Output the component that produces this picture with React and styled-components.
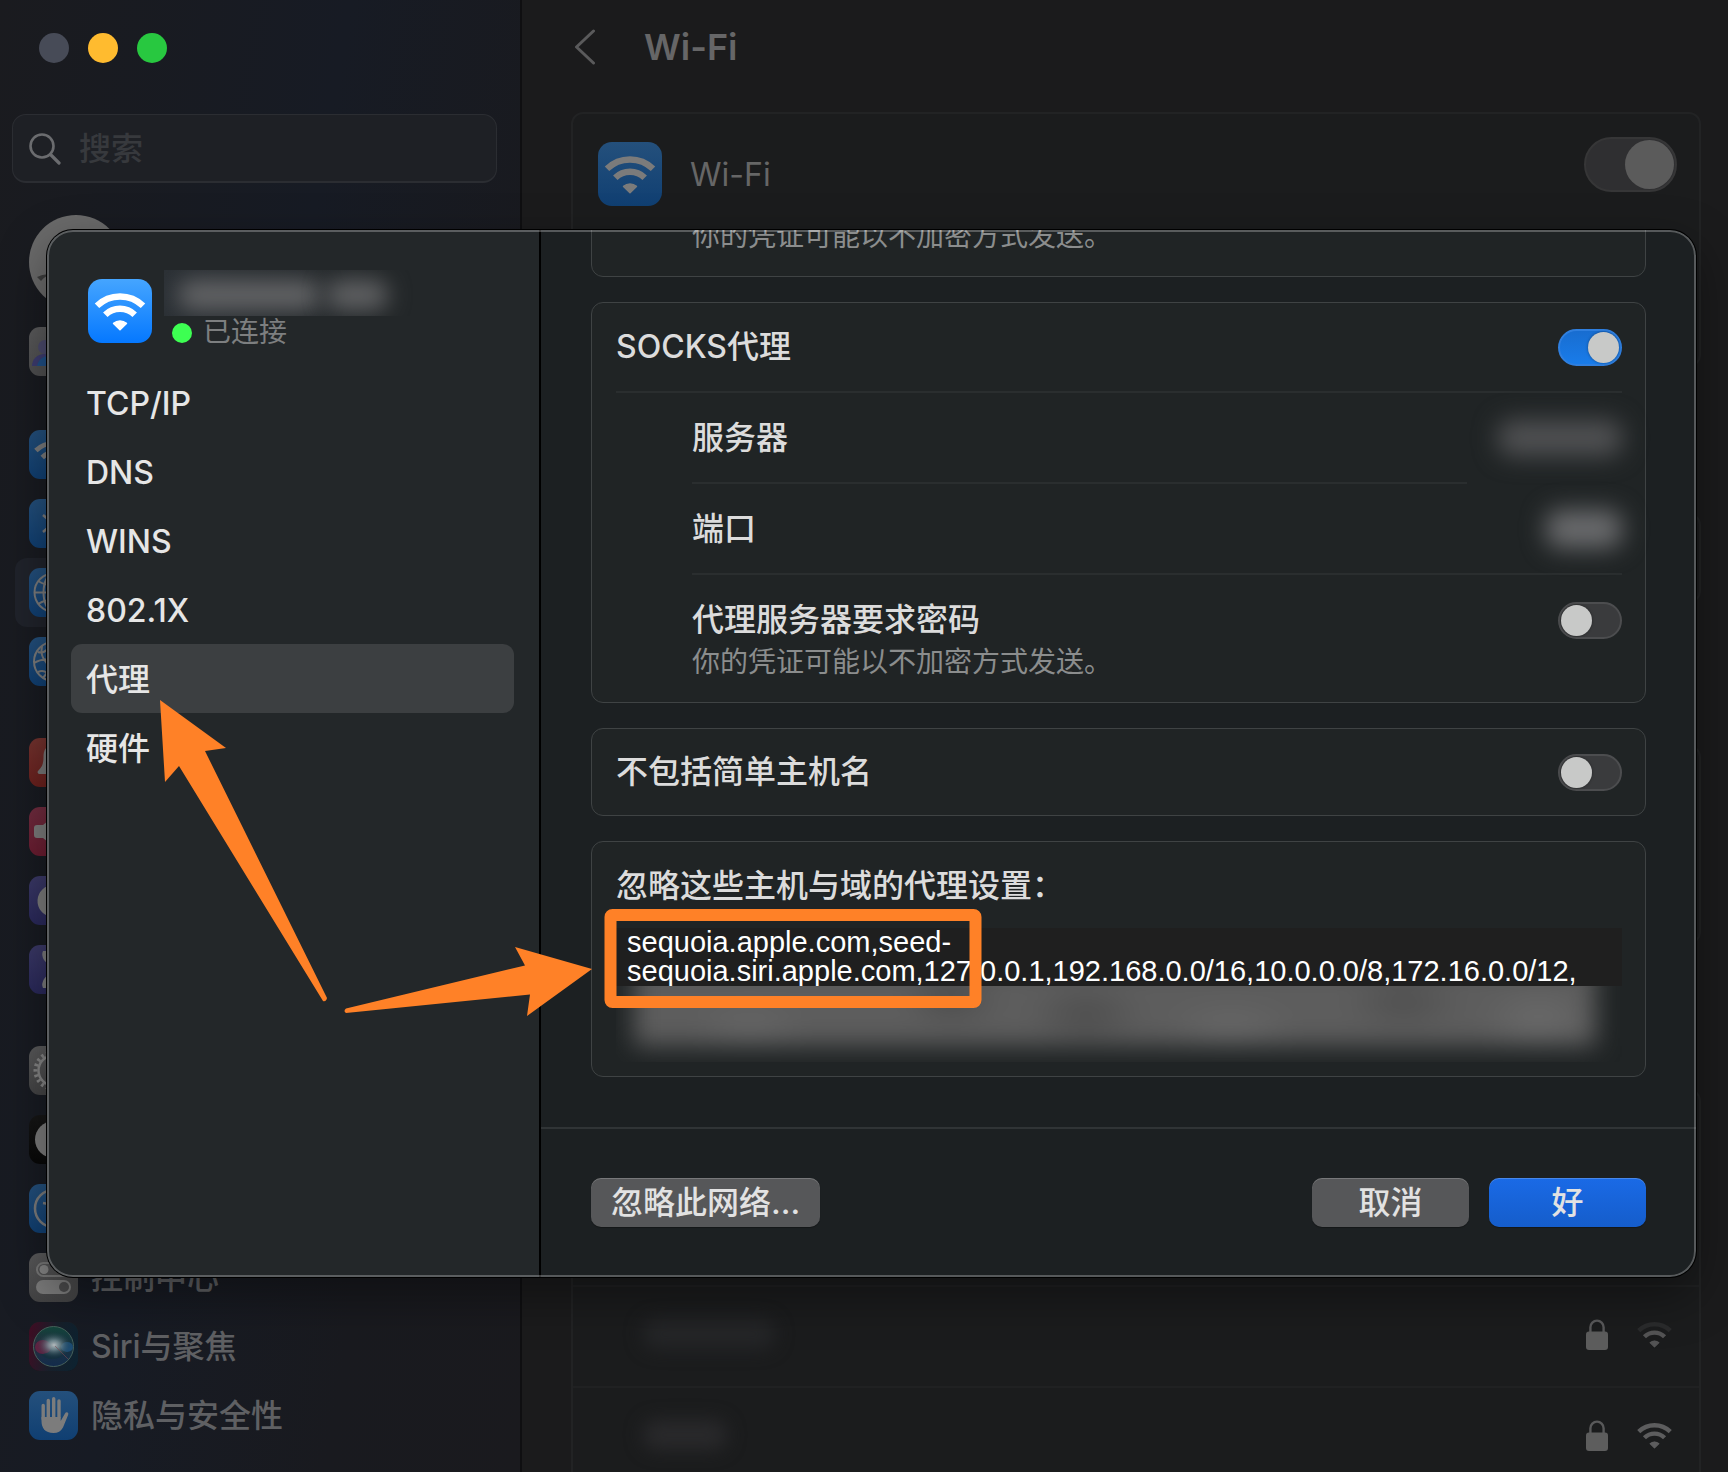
import React from "react";
import styled, { createGlobalStyle, css } from "styled-components";

const GlobalStyle = createGlobalStyle`
  *, *::before, *::after { box-sizing: border-box; }
  body {
    margin: 0;
    background: #1b1b1c;
    color: #dddddd;
    font-family: Inter, "Noto Sans CJK SC", sans-serif;
    font-size: 32px;
    font-weight: 500;
    line-height: 44px;
  }
  button, input, textarea { font: inherit; color: inherit; }
`;

/* ---------- window behind the sheet ---------- */

const Window = styled.div`
  position: relative;
  display: flex;
  min-height: 100vh;
  overflow: hidden;
`;

const Sidebar = styled.aside`
  flex: none;
  width: 522px;
  padding: 33px 23px 22px 12px;
  border-right: 2px solid #0f0f11;
  background: linear-gradient(100deg, #1a1b1f 0%, #171b24 45%, #191a1f 75%, #1a1a1e 100%);
`;

const TrafficLights = styled.div`
  display: flex;
  gap: 19px;
  padding-left: 27px;
`;

const Light = styled.button`
  width: 30px;
  height: 30px;
  padding: 0;
  border: 0;
  border-radius: 50%;
  background: ${(p) => p.$color};
`;

const SearchBox = styled.label`
  display: flex;
  align-items: center;
  gap: 18px;
  height: 69px;
  margin-top: 51px;
  padding: 2px 16px 0;
  border: 1px solid #2b2d32;
  border-bottom: 2px solid #2b2d32;
  border-radius: 14px;
  background: #1e2025;
`;

const SearchInput = styled.input`
  flex: 1;
  min-width: 0;
  padding: 0;
  border: 0;
  outline: 0;
  background: none;
  &::placeholder { color: #37393d; opacity: 1; }
`;

const Avatar = styled.div`
  width: 94px;
  height: 94px;
  margin: 32px 0 8px 17px;
  border-radius: 50%;
  overflow: hidden;
  background: #6a6a6a;
`;

const SideGroup = styled.nav`
  display: flex;
  flex-direction: column;
  margin-bottom: ${(p) => p.$gap || 0}px;
`;

const SideItem = styled.a`
  display: flex;
  align-items: center;
  gap: 13px;
  height: 69px;
  margin-left: 3px;
  padding-left: 14px;
  border-radius: 12px;
  color: #5f6063;
  text-decoration: none;
  background: ${(p) => (p.$selected ? "#20232b" : "none")};
`;

const TileBox = styled.span`
  flex: none;
  display: block;
  width: ${(p) => p.$size}px;
  height: ${(p) => p.$size}px;
  border-radius: ${(p) => (p.$size > 50 ? 14 : 11)}px;
  overflow: hidden;
  background: linear-gradient(${(p) => p.$from}, ${(p) => p.$to});
  svg { display: block; width: 100%; height: 100%; }
`;

const Main = styled.main`
  flex: 1;
  min-width: 0;
  display: flex;
  flex-direction: column;
  padding: 0 27px 0 49px;
`;

const TitleBar = styled.header`
  display: flex;
  align-items: center;
  gap: 48px;
  height: 94px;
  margin-bottom: 18px;
`;

const BackButton = styled.button`
  display: flex;
  padding: 0 0 0 3px;
  border: 0;
  background: none;
`;

const Title = styled.h1`
  margin: 0;
  color: #666667;
  font-size: 36px;
  font-weight: 600;
`;

const Panel = styled.section`
  flex: none;
  min-height: ${(p) => p.$height}px;
  margin-bottom: ${(p) => p.$gap}px;
  border: 2px solid #222324;
  border-radius: 12px;
  background: #1b1c1d;
`;

const NetworkPanel = styled(Panel)`
  flex: 1 0 auto;
  display: flex;
  flex-direction: column;
  min-height: 0;
  margin-bottom: 0;
  padding-top: 194px;
  border-bottom: 0;
  border-radius: 12px 12px 0 0;
`;

const WifiHeading = styled.div`
  display: flex;
  align-items: flex-start;
  gap: 28px;
  padding: 28px 22px 0 25px;
  color: #666666;
  font-weight: 400;
`;

const WifiLabel = styled.label`
  flex: 1;
  padding-top: 11px;
`;

const BigSwitch = styled.input`
  appearance: none;
  display: flex;
  justify-content: flex-end;
  width: 93px;
  height: 55px;
  margin: -5px 0 0;
  padding: 1px;
  border: 2px solid #363637;
  border-radius: 28px;
  background: #2f2f31;
  &::before {
    content: "";
    width: 49px;
    height: 49px;
    border-radius: 50%;
    background: #5b5b5b;
  }
`;

const NetworkRow = styled.div`
  display: flex;
  align-items: flex-start;
  gap: 28px;
  min-height: ${(p) => (p.$last ? 85 : 101)}px;
  padding: 32px 26px 0 70px;
  border-top: 2px solid #202122;
`;

const Spacer = styled.span`
  flex: 1;
`;

const Smudge = styled.span`
  flex: none;
  display: block;
  width: ${(p) => p.$w}px;
  height: ${(p) => p.$h}px;
  border-radius: 14px;
  background: ${(p) => p.$color};
  filter: blur(${(p) => p.$blur || 9}px);
`;

/* ---------- sheet ---------- */

const Overlay = styled.div`
  position: absolute;
  inset: 0;
  display: flex;
  padding: 230px 32px 195px 47px;
`;

const Sheet = styled.div`
  position: relative;
  flex: 1;
  min-width: 0;
  display: flex;
  overflow: hidden;
  border-radius: 26px;
  background: #1c2022;
  box-shadow: 0 0 0 1px #000000, 0 18px 50px rgba(0, 0, 0, 0.4);
  &::after {
    content: "";
    position: absolute;
    inset: 0;
    border: 2px solid rgba(255, 255, 255, 0.26);
    border-radius: 26px;
    pointer-events: none;
  }
`;

const SheetSide = styled.div`
  flex: none;
  width: 494px;
  padding: 40px 25px 0 24px;
  border-right: 2px solid #000000;
  background: #232729;
`;

const NetworkHead = styled.div`
  display: flex;
  gap: 12px;
  height: 98px;
  padding: 9px 0 0 17px;
`;

const NetworkInfo = styled.div`
  display: flex;
  flex-direction: column;
  margin-top: -9px;
`;

const NameClip = styled.div`
  width: 250px;
  height: 46px;
  padding: 10px 22px 0 14px;
  overflow: hidden;
  display: flex;
  gap: 6px;
  background: linear-gradient(90deg, #2b3035, #232729 90%);
`;

const Status = styled.div`
  display: flex;
  align-items: center;
  gap: 11px;
  height: 33px;
  padding-left: 8px;
  color: #7d7f80;
  font-size: 28px;
  font-weight: 400;
  line-height: 33px;
`;

const StatusDot = styled.span`
  width: 20px;
  height: 20px;
  border-radius: 50%;
  background: #3dff52;
`;

const Tab = styled.button`
  display: block;
  width: 100%;
  height: 69px;
  padding: 2px 15px 0;
  border: 0;
  border-radius: 11px;
  text-align: left;
  color: #e6e6e6;
  background: ${(p) => (p.$selected ? "#3c3f41" : "none")};
`;

const SheetMain = styled.div`
  flex: 1;
  min-width: 0;
  display: flex;
  flex-direction: column;
`;

const ScrollArea = styled.div`
  flex: 1 1 0;
  min-height: 0;
  display: flex;
  flex-direction: column;
  justify-content: flex-end;
  gap: 25px;
  overflow: hidden;
  padding: 0 50px 50px;
`;

const Card = styled.section`
  flex: none;
  padding: 0 23px 0 24px;
  border: 1px solid #3f4344;
  border-radius: 12px;
  background: #202425;
`;

const Row = styled.div`
  display: flex;
  align-items: center;
  justify-content: space-between;
  height: ${(p) => p.$height}px;
  color: #dcdcdc;
`;

const Divider = styled.hr`
  height: 2px;
  margin: 0 ${(p) => p.$short || 0}px 0 0;
  border: 0;
  background: #2a2e2f;
`;

const Indent = styled.div`
  padding-left: 76px;
`;

const PasswordRow = styled.div`
  display: flex;
  justify-content: space-between;
  padding: 23px 0 20px;
`;

const NoteRow = styled.div`
  padding: 20px 0;
`;

const SubText = styled.div`
  color: #8b8d8d;
  font-size: 28px;
  font-weight: 400;
  line-height: 40px;
`;

const RowLabel = styled.label`
  display: block;
  color: #dcdcdc;
`;

const Switch = styled.input`
  appearance: none;
  flex: none;
  display: flex;
  width: 64px;
  height: 37px;
  margin: 4px 0 0;
  padding: 1px;
  border: 2px solid #4c4d4f;
  border-radius: 19px;
  background: #3a3b3d;
  &::before {
    content: "";
    width: 31px;
    height: 31px;
    border-radius: 50%;
    background: #c8c9c8;
    box-shadow: 0 0 3px rgba(0, 0, 0, 0.4);
  }
  ${Row} > & { margin-top: 0; }
  ${(p) =>
    p.$on &&
    css`
      justify-content: flex-end;
      border-color: #2f7fdf;
      background: linear-gradient(#186dd0, #197cea);
    `}
`;

const HostsCard = styled(Card)`
  padding: 22px 23px 14px 24px;
`;

const HostsInput = styled.textarea`
  display: block;
  width: 100%;
  height: 58px;
  margin: 20px 0 0;
  padding: 0 12px 0 11px;
  border: 0;
  outline: 0;
  resize: none;
  overflow: hidden;
  background: #1f1f1f;
  color: #ffffff;
  font-family: "Liberation Sans", "Noto Sans CJK SC", sans-serif;
  font-size: 29px;
  line-height: 29px;
`;

const HiddenHosts = styled.div`
  height: 76px;
  overflow: hidden;
`;

const HiddenFill = styled.div`
  height: 80px;
  margin: -20px 26px 0 18px;
  background:
    radial-gradient(ellipse 60px 30px at 12% 80%, #666666, transparent),
    radial-gradient(ellipse 50px 30px at 33% 40%, #4a4a4a, transparent),
    radial-gradient(ellipse 60px 30px at 47% 60%, #4c4c4c, transparent),
    radial-gradient(ellipse 70px 30px at 62% 80%, #686868, transparent),
    radial-gradient(ellipse 60px 30px at 80% 45%, #4e4e4e, transparent),
    radial-gradient(ellipse 60px 40px at 94% 70%, #6a6a6a, transparent),
    #5d5d5d;
  filter: blur(12px);
`;

const Footer = styled.footer`
  display: flex;
  gap: 20px;
  height: 150px;
  padding: 49px 50px 0;
  border-top: 2px solid #303436;
`;

const PushButton = styled.button`
  height: 49px;
  min-width: 157px;
  padding: 0 20px;
  border: 0;
  border-radius: 10px;
  color: #e2e2e2;
  line-height: 46px;
  background: ${(p) => (p.$primary ? "linear-gradient(#1a6ae6, #155dcb)" : "#565759")};
  box-shadow: inset 0 1px 0 rgba(255, 255, 255, 0.2), 0 1px 1px rgba(0, 0, 0, 0.3);
`;

const Annotations = styled.svg`
  position: absolute;
  left: 0;
  top: 0;
  pointer-events: none;
`;

/* ---------- drawings ---------- */

const DIM = "#7b7b7b";

function WifiGlyph({ color, outer, viewBox = "0 0 64 64", width, height }) {
  return (
    <svg viewBox={viewBox} width={width} height={height} fill="none" stroke={color} strokeWidth="6.4">
      <path d="M9 26.8A33 33 0 0 1 55 26.8" stroke={outer || color} />
      <path d="M17.3 35.8A21 21 0 0 1 46.7 35.8" />
      <path d="M25.6 44.4A10 10 0 0 1 38.4 44.4L32 50.6Z" fill={color} strokeWidth="1.6" strokeLinejoin="round" />
    </svg>
  );
}

function LockGlyph() {
  return (
    <svg width="22" height="31" viewBox="0 0 22 31">
      <path d="M4.4 14V8.2a6.6 6.6 0 0 1 13.2 0V14" fill="none" stroke="#59595a" strokeWidth="2.4" />
      <rect x="0" y="12.4" width="22" height="18.6" rx="3" fill="#5d5d5d" />
    </svg>
  );
}

const glyphs = {
  family: (
    <svg viewBox="0 0 49 49">
      <circle cx="16" cy="20" r="7" fill="#4b4a6c" />
      <path d="M3 39a12 12 0 0 1 24 0z" fill="#3d3c70" />
      <circle cx="30" cy="22" r="8" fill="#2f5f8a" />
      <path d="M8 39c2-9 8-10 14-10h16v10z" fill="#1f4f86" />
    </svg>
  ),
  wifi: <WifiGlyph color={DIM} />,
  bluetooth: (
    <svg viewBox="0 0 49 49" fill="none" stroke={DIM} strokeWidth="2.6">
      <path d="M14 16l20 17-10 8V8l10 8-20 17" />
    </svg>
  ),
  globe: (
    <svg viewBox="0 0 49 49" fill="none" stroke={DIM} strokeWidth="2">
      <circle cx="24.5" cy="24.5" r="19" />
      <ellipse cx="24.5" cy="24.5" rx="10" ry="19" />
      <path d="M5.5 24.5h38M24.5 5.5v38M9 13q15.5 9 31 0M9 36q15.5-9 31 0" />
    </svg>
  ),
  vpn: (
    <svg viewBox="0 0 49 49" fill="none" stroke={DIM} strokeWidth="2">
      <circle cx="24.5" cy="24.5" r="19.5" />
      <path d="M5 26q10-6 20-2t19-2M13 9q-2 10 4 16t-3 16M9 15q8 3 14-10M9 35q8-4 14 8" />
    </svg>
  ),
  bell: (
    <svg viewBox="0 0 49 49" fill="#777">
      <path d="M24.5 7c-8 0-10 6-10 12 0 9-3 11-5.5 14-1 1.5 0 3 2 3h27c2 0 3-1.5 2-3-2.5-3-5.5-5-5.5-14 0-6-2-12-10-12zM20 38h9a4.5 4.5 0 0 1-9 0z" />
    </svg>
  ),
  speaker: (
    <svg viewBox="0 0 49 49" fill={DIM}>
      <path d="M8 18h6l10-8v29l-10-8H8q-3 0-3-3v-7q0-3 3-3z" />
    </svg>
  ),
  moon: (
    <svg viewBox="0 0 49 49" fill={DIM}>
      <path d="M24 9a16 16 0 1 0 16 20A15 15 0 0 1 24 9z" />
    </svg>
  ),
  hourglass: (
    <svg viewBox="0 0 49 49" fill={DIM}>
      <path d="M14 6h21q2 4-1 9l-8 9 8 10q3 5 1 9H14q-2-4 1-9l8-10-8-9q-3-5-1-9z" />
    </svg>
  ),
  gear: (
    <svg viewBox="0 0 49 49" fill="none" stroke="#858585">
      <circle cx="24.5" cy="24.5" r="18" strokeWidth="4" strokeDasharray="2.6 2.9" />
      <circle cx="24.5" cy="24.5" r="15" strokeWidth="2.5" />
      <circle cx="24.5" cy="24.5" r="5" strokeWidth="2.5" />
    </svg>
  ),
  contrast: (
    <svg viewBox="0 0 49 49">
      <circle cx="24.5" cy="24.5" r="18.5" fill={DIM} />
      <path d="M24.5 10a14.5 14.5 0 0 1 0 29z" fill="#111" />
    </svg>
  ),
  person: (
    <svg viewBox="0 0 49 49" fill="none" stroke={DIM} strokeWidth="2.5">
      <circle cx="24.5" cy="24.5" r="18.5" />
      <path d="M14 19l10.5 2 10.5-2M24.5 21v8l-5 9M24.5 29l5 9" />
    </svg>
  ),
  toggles: (
    <svg viewBox="0 0 49 49">
      <rect x="8" y="10" width="33" height="13" rx="6.5" fill="none" stroke="#777777" strokeWidth="2" />
      <circle cx="15" cy="16.5" r="4.5" fill="#858585" />
      <rect x="7" y="27" width="35" height="14" rx="7" fill="#7c7c7c" />
      <circle cx="35" cy="34" r="5" fill="#4b4b4c" />
    </svg>
  ),
  siri: (
    <svg viewBox="0 0 49 49">
      <defs>
        <radialGradient id="siri-core">
          <stop offset="0" stopColor="#b4babd" />
          <stop offset="0.35" stopColor="#7d949b" stopOpacity="0.8" />
          <stop offset="1" stopColor="#29444d" stopOpacity="0" />
        </radialGradient>
        <linearGradient id="siri-base" x1="0" x2="1" y1="0.4" y2="0.6">
          <stop offset="0" stopColor="#3c0f24" />
          <stop offset="0.5" stopColor="#171f2a" />
          <stop offset="1" stopColor="#0d2230" />
        </linearGradient>
        <linearGradient id="siri-top" x1="0" x2="0" y1="0" y2="1">
          <stop offset="0" stopColor="#13463a" />
          <stop offset="0.5" stopColor="#1d3f50" stopOpacity="0.5" />
          <stop offset="1" stopColor="#122a4c" />
        </linearGradient>
      </defs>
      <rect width="49" height="49" fill="url(#siri-base)" />
      <circle cx="24.5" cy="24.5" r="20" fill="url(#siri-top)" stroke="#46605a" />
      <ellipse cx="14" cy="25" rx="8" ry="7" fill="#6d2142" opacity="0.8" />
      <ellipse cx="38" cy="25" rx="6" ry="5" fill="#1f5480" opacity="0.8" />
      <path d="M12 32c8 0 14-6 24-2-4 8-18 10-24 2z" fill="#15303f" />
      <ellipse cx="25" cy="23" rx="17" ry="13" fill="url(#siri-core)" />
      <path d="M26 24l13 13" stroke="#7a4a52" opacity="0.6" />
    </svg>
  ),
  hand: (
    <svg viewBox="0 0 49 49" fill="none" stroke="#7c7c7c" strokeWidth="3.4" strokeLinecap="round">
      <path d="M14.2 14.5V28M19.3 9.5V26M24.7 7.7V26M30 10V26" />
      <path d="M12.5 26h19.2v4l4.3-7.5c1-2 4-1.2 3.2 1.2L34 36.5Q31 42 24.5 42C16 42 12.5 37 12.5 30z" fill="#7c7c7c" stroke="none" />
    </svg>
  ),
};

const BLUE = ["#24507c", "#103f72"];
const GREY = ["#5a5a5b", "#434344"];

const sideGroups = [
  {
    gap: 32,
    items: [
      { glyph: "wifi", colors: BLUE },
      { glyph: "bluetooth", colors: BLUE },
      { glyph: "globe", colors: BLUE, selected: true },
      { glyph: "vpn", colors: BLUE },
    ],
  },
  {
    gap: 32,
    items: [
      { glyph: "bell", colors: ["#74332f", "#6a201d"] },
      { glyph: "speaker", colors: ["#702c3f", "#6a1c30"] },
      { glyph: "moon", colors: ["#3b3967", "#29285a"] },
      { glyph: "hourglass", colors: ["#3b3967", "#29285a"] },
    ],
  },
  {
    gap: 0,
    items: [
      { glyph: "gear", colors: GREY },
      { glyph: "contrast", colors: ["#161616", "#080808"] },
      { glyph: "person", colors: BLUE },
      { glyph: "toggles", colors: GREY, label: "控制中心" },
      { glyph: "siri", colors: ["#222", "#111"], label: "Siri与聚焦" },
      { glyph: "hand", colors: BLUE, label: "隐私与安全性" },
    ],
  },
];

const tabs = ["TCP/IP", "DNS", "WINS", "802.1X", "代理", "硬件"];

const hosts =
  "sequoia.apple.com,seed-sequoia.siri.apple.com,127.0.0.1,192.168.0.0/16,10.0.0.0/8,172.16.0.0/12,";

function Tile({ glyph, colors, size = 49 }) {
  return (
    <TileBox $size={size} $from={colors[0]} $to={colors[1]}>
      {glyphs[glyph]}
    </TileBox>
  );
}

function BackgroundWindow() {
  return (
    <>
      <Sidebar>
        <TrafficLights>
          <Light $color="#474b57" aria-label="关闭" />
          <Light $color="#ffbb2f" aria-label="最小化" />
          <Light $color="#28c840" aria-label="缩放" />
        </TrafficLights>
        <SearchBox>
          <svg width="32" height="32" viewBox="0 0 32 32" fill="none" stroke="#6b6c6f" strokeWidth="2.6" strokeLinecap="round">
            <circle cx="13" cy="13" r="11.5" />
            <path d="M21.5 21.5L30 30" strokeWidth="3.2" />
          </svg>
          <SearchInput type="search" placeholder="搜索" aria-label="搜索" />
        </SearchBox>
        <Avatar>
          <svg width="94" height="94" viewBox="0 0 94 94">
            <path d="M8 62q8-4 16-2-8 0-12 6z" fill="#3c3c3c" />
          </svg>
        </Avatar>
        <SideGroup $gap={34}>
          <SideItem href="#family">
            <Tile glyph="family" colors={["#5b5b5c", "#4e4e4f"]} />
          </SideItem>
        </SideGroup>
        {sideGroups.map((group, i) => (
          <SideGroup key={i} $gap={group.gap}>
            {group.items.map((item) => (
              <SideItem key={item.glyph} href={"#" + item.glyph} $selected={item.selected}>
                <Tile glyph={item.glyph} colors={item.colors} />
                {item.label}
              </SideItem>
            ))}
          </SideGroup>
        ))}
      </Sidebar>
      <Main>
        <TitleBar>
          <BackButton aria-label="返回">
            <svg width="22" height="36" viewBox="0 0 22 36" fill="none" stroke="#5a5a5b" strokeWidth="3" strokeLinecap="round" strokeLinejoin="round">
              <path d="M19.5 2L2.5 18l17 16" />
            </svg>
          </BackButton>
          <Title>Wi-Fi</Title>
        </TitleBar>
        <Panel $height={255} $gap={146}>
          <WifiHeading>
            <Tile glyph="wifi" colors={BLUE} size={64} />
            <WifiLabel htmlFor="wifi-power">Wi-Fi</WifiLabel>
            <BigSwitch id="wifi-power" type="checkbox" role="switch" defaultChecked />
          </WifiHeading>
        </Panel>
        <Panel $height={90} $gap={142} />
        <Panel $height={199} $gap={145} />
        <NetworkPanel as="section">
          <NetworkRow>
            <Smudge $w={132} $h={30} $color="#252628" />
            <Spacer />
            <LockGlyph />
            <WifiGlyph color="#545455" outer="#2a2b2c" viewBox="5 12 54 41" width={37} height={31} />
          </NetworkRow>
          <NetworkRow $last>
            <Smudge $w={84} $h={30} $color="#29292b" />
            <Spacer />
            <LockGlyph />
            <WifiGlyph color="#5d5d5e" viewBox="5 12 54 41" width={37} height={31} />
          </NetworkRow>
        </NetworkPanel>
      </Main>
    </>
  );
}

function ProxySheet() {
  return (
    <Sheet role="dialog">
      <SheetSide>
        <NetworkHead>
          <TileBox $size={64} $from="#45a5ff" $to="#0578ff">
            <WifiGlyph color="#ffffff" />
          </TileBox>
          <NetworkInfo>
            <NameClip>
              <Smudge $w={142} $h={30} $color="#636466" $blur={11} />
              <Smudge $w={62} $h={30} $color="#606163" $blur={11} />
            </NameClip>
            <Status>
              <StatusDot />
              已连接
            </Status>
          </NetworkInfo>
        </NetworkHead>
        {tabs.map((tab) => (
          <Tab key={tab} $selected={tab === "代理"}>
            {tab}
          </Tab>
        ))}
      </SheetSide>
      <SheetMain>
        <ScrollArea>
          <Card>
            <Indent>
              <NoteRow>
                <SubText>你的凭证可能以不加密方式发送。</SubText>
              </NoteRow>
            </Indent>
          </Card>
          <Card>
            <Row $height={88}>
              <label htmlFor="socks">SOCKS代理</label>
              <Switch id="socks" type="checkbox" role="switch" defaultChecked $on />
            </Row>
            <Divider />
            <Indent>
              <Row $height={89}>
                服务器
                <Smudge $w={124} $h={36} $color="#505153" $blur={12} />
              </Row>
              <Divider $short={155} />
              <Row $height={89}>
                端口
                <Smudge $w={76} $h={38} $color="#6a6b6d" $blur={12} />
              </Row>
              <Divider />
              <PasswordRow>
                <div>
                  <RowLabel htmlFor="socks-password">代理服务器要求密码</RowLabel>
                  <SubText>你的凭证可能以不加密方式发送。</SubText>
                </div>
                <Switch id="socks-password" type="checkbox" role="switch" />
              </PasswordRow>
            </Indent>
          </Card>
          <Card>
            <Row $height={86}>
              <label htmlFor="simple-hosts">不包括简单主机名</label>
              <Switch id="simple-hosts" type="checkbox" role="switch" />
            </Row>
          </Card>
          <HostsCard>
            <RowLabel htmlFor="hosts">忽略这些主机与域的代理设置：</RowLabel>
            <HostsInput id="hosts" defaultValue={hosts} spellCheck={false} />
            <HiddenHosts>
              <HiddenFill />
            </HiddenHosts>
          </HostsCard>
        </ScrollArea>
        <Footer>
          <PushButton>忽略此网络...</PushButton>
          <Spacer />
          <PushButton>取消</PushButton>
          <PushButton $primary>好</PushButton>
        </Footer>
      </SheetMain>
    </Sheet>
  );
}

export default function App() {
  return (
    <Window>
      <GlobalStyle />
      <BackgroundWindow />
      <Overlay>
        <ProxySheet />
      </Overlay>
      <Annotations width="1728" height="1472" viewBox="0 0 1728 1472" fill="#ff8127" aria-hidden="true">
        <path d="M160 700L226 748L205 751L327 998Q326 1002 323 1001L179 766L165 782Z" />
        <path d="M592 969L527 1016L530 994.5L346 1013Q343 1011 346 1008.5L525 965.5L515 947Z" />
        <rect x="610.5" y="915" width="365" height="87" rx="2" fill="none" stroke="#ff8127" strokeWidth="12" strokeLinejoin="round" />
      </Annotations>
    </Window>
  );
}
